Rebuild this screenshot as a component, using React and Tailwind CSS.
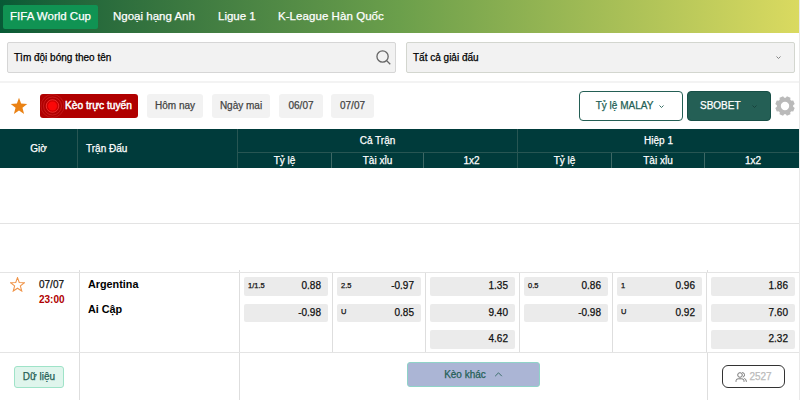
import React from "react";

const LEAGUES = [
  { name: "Ngoại hạng Anh", cls: "ml-[15px] w-[84px]" },
  { name: "Ligue 1", cls: "ml-[21px] w-[39px]" },
  { name: "K-League Hàn Quốc", cls: "ml-[21px] tracking-[0.06px]" },
];

const DAYS = [
  { name: "Hôm nay", cls: "ml-[9px] w-[56px]" },
  { name: "Ngày mai", cls: "ml-[9px] w-[58px]" },
  { name: "06/07", cls: "ml-[9px] w-[44px]" },
  { name: "07/07", cls: "ml-[8px] w-[43px]" },
];

const MARKETS = [
  { width: "w-[93px]", odds: [["1/1.5", "0.88"], ["", "-0.98"]] },
  { width: "w-[93px]", odds: [["2.5", "-0.97"], ["U", "0.85"]] },
  { width: "w-[94px]", odds: [["", "1.35"], ["", "9.40"], ["", "4.62"]] },
  { width: "w-[93px]", odds: [["0.5", "0.86"], ["", "-0.98"]] },
  { width: "w-[94px]", odds: [["1", "0.96"], ["U", "0.92"]] },
  { width: "w-[93px]", odds: [["", "1.86"], ["", "7.60"], ["", "2.32"]] },
];

const STAR = "M12 1l2.800 7.800 8.200.4-6.400 5.100 2.200 8.200L12 17.900l-6.800 4.600 2.200-8.200L1 9.200l8.200-.4z";

function Star({ filled, className }) {
  return (
    <svg viewBox="0 0 24 24" className={className} fill={filled ? "#ea8215" : "none"} stroke="#f0954a" strokeWidth={filled ? 0 : 1.7}>
      <path d={STAR} />
    </svg>
  );
}

function Chevron({ up, className }) {
  return (
    <svg viewBox="0 0 10 6" className={className} fill="none" stroke="currentColor" strokeWidth={up ? 1 : 1.8}>
      <path d={up ? "M1 5l4-4 4 4" : "M1 1l4 4 4-4"} />
    </svg>
  );
}

function Gear() {
  return (
    <svg viewBox="0 0 20 20" className="ml-[4px] h-[20px] w-[20px]" fill="none">
      <circle cx="10" cy="10" r="6.200" stroke="#bababa" strokeWidth="4" />
      <g fill="#bababa">
        {[22.5, 67.5, 112.5, 157.5, 202.5, 247.5, 292.5, 337.5].map((a) => (
          <path key={a} d="M7.300 3L8.100 0.300h3.800L12.700 3z" transform={`rotate(${a} 10 10)`} />
        ))}
      </g>
    </svg>
  );
}

function Live() {
  return (
    <svg viewBox="0 0 24 24" className="h-[24px] w-[24px] shrink-0 overflow-visible" fill="none">
      <circle cx="12.500" cy="12" r="11.500" stroke="#dc4040" strokeOpacity=".5" strokeWidth=".7" />
      <circle cx="12.500" cy="12" r="9" stroke="#e84040" strokeOpacity=".6" strokeWidth=".7" />
      <circle cx="12.500" cy="12" r="6.300" fill="#cf0000" stroke="#ff4545" strokeOpacity=".8" strokeWidth=".8" />
      <circle cx="12.500" cy="12" r="4.500" fill="#fb0808" />
    </svg>
  );
}

function HeadGroup({ title, widths, className }) {
  return (
    <div className={`flex flex-col border-l border-[#275653] ${className}`}>
      <div className="flex h-[24px] items-center justify-center border-b border-[#275653]">{title}</div>
      <div className="flex h-[15px]">
        {["Tỷ lệ", "Tài xỉu", "1x2"].map((t, i) => (
          <div key={t} className={`flex items-center justify-center ${widths[i]} ${i ? "border-l border-[#3d6865]" : ""} ${i === 2 ? "pl-[2px]" : ""}`}>
            {t}
          </div>
        ))}
      </div>
    </div>
  );
}

export default function App() {
  return (
    <div className="h-[400px] w-[800px] overflow-hidden border-r border-[#e9e9e9] bg-white font-['Liberation_Sans',Arial,sans-serif] text-[10px] leading-none text-[#111] [-webkit-text-stroke:0.25px]">
      <nav className="flex h-[33px] items-center bg-linear-to-r from-[#075a36] via-[#6b9f4b] to-[#dada60] pl-[3px] text-[11.5px] whitespace-nowrap text-white">
        <div className="flex h-[24px] w-[95px] items-center justify-center rounded-[2px] bg-[#109353]">FIFA World Cup</div>
        {LEAGUES.map((l) => (
          <div key={l.name} className={l.cls}>{l.name}</div>
        ))}
      </nav>

      <div className="flex h-[50px] gap-[10px] border-b-2 border-[#f3f3f3] pt-[9px] pr-[4px] pl-[7px] text-black">
        <div className="flex h-[31px] w-[389px] items-center justify-between rounded-[2px] border border-[#d6d6d6] bg-[#f2f2f2] pr-[4px] pl-[6px]">
          <span>Tìm đội bóng theo tên</span>
          <svg viewBox="0 0 16 16" className="h-[15px] w-[15px]" fill="none" stroke="#666" strokeWidth="1.4">
            <circle cx="7" cy="7" r="6" />
            <path d="M11.200 11.200l4 4" />
          </svg>
        </div>
        <div className="flex h-[31px] w-[389px] items-center justify-between rounded-[2px] border border-[#d3d6cf] bg-[#f2f2f2] pr-[13px] pl-[6px]">
          <span>Tất cả giải đấu</span>
          <Chevron className="h-[3px] w-[5px] text-[#777]" />
        </div>
      </div>

      <div className="flex h-[46px] items-center pr-[4px] pl-[10px] whitespace-nowrap text-[#444]">
        <Star filled className="h-[18px] w-[18px]" />
        <div className="ml-[12px] flex h-[24px] w-[98px] items-center rounded-[3px] bg-[#b00000] text-white [-webkit-text-stroke:0.45px]">
          <Live />
          <span className="ml-[1px] text-[10.200px]">Kèo trực tuyến</span>
        </div>
        {DAYS.map((d) => (
          <div key={d.name} className={`flex h-[24px] items-center justify-center rounded-[3px] bg-[#f2f2f2] ${d.cls}`}>{d.name}</div>
        ))}
        <div className="ml-auto flex h-[30px] w-[104px] items-center justify-center gap-[6px] rounded-[4px] border border-[#245f55] pr-[2px] text-[#245f55]">
          Tỷ lệ MALAY
          <Chevron className="h-[3px] w-[5px]" />
        </div>
        <div className="ml-[4px] flex h-[30px] w-[84px] items-center rounded-[4px] border border-[#174f47] bg-[#245f55] pl-[12px] text-white">
          SBOBET
          <Chevron className="ml-[11px] h-[3px] w-[5px] text-[#163f3a]" />
        </div>
        <Gear />
      </div>

      <div className="flex h-[39px] w-[799px] bg-[#003b3b] text-white">
        <div className="flex w-[77px] items-center justify-center">Giờ</div>
        <div className="flex w-[160px] items-center border-l border-[#275653] pl-[8px]">Trận Đấu</div>
        <HeadGroup title="Cả Trận" className="w-[280px]" widths={["w-[93px]", "w-[92px]", "w-[94px]"]} />
        <HeadGroup title="Hiệp 1" className="w-[282px]" widths={["w-[93px]", "w-[93px]", "w-[95px]"]} />
      </div>

      <div className="h-[56px] border-b border-[#e3e3e3]" />
      <div className="h-[46px]" />
      <div className="flex h-[2px]">
        <div className="w-[79px]" />
        <div className="w-[160px] border-l border-[#dedede]" />
        <div className="w-[468px] border-l border-[#dedede]" />
        <div className="border-l border-[#dedede]" />
      </div>

      <div className="flex h-[81px] border-y border-[#e4e4e4]">
        <div className="flex w-[79px] pl-[10px]">
          <Star className="mt-[4px] h-[15px] w-[15px]" />
          <div className="ml-[14px] pt-[7px]">
            <div>07/07</div>
            <div className="mt-[5px] font-bold text-[#b00000] [-webkit-text-stroke:0px]">23:00</div>
          </div>
        </div>
        <div className="w-[160px] border-l border-[#dedede] pt-[6px] pl-[8px] text-[10.800px] font-bold text-black [-webkit-text-stroke:0px]">
          <div>Argentina</div>
          <div className="mt-[14px]">Ai Cập</div>
        </div>
        {MARKETS.map((m, i) => (
          <div key={i} className={`flex flex-col gap-[8px] border-l border-[#dedede] px-[4px] pt-[4px] ${m.width}`}>
            {m.odds.map(([line, price], j) => (
              <div key={j} className="flex h-[18.500px] items-center justify-between rounded-[2px] bg-[#ebebeb] pr-[7px] pl-[4px]">
                <span className="mb-[2px] text-[7.500px]">{line}</span>
                <span>{price}</span>
              </div>
            ))}
          </div>
        ))}
      </div>

      <div className="flex h-[47px]">
        <div className="w-[79px] pt-[13px] pl-[14px]">
          <div className="flex h-[22px] w-[50px] items-center justify-center rounded-[3px] border border-[#9fe3c8] bg-[#dff5ec] text-[#245f55]">Dữ liệu</div>
        </div>
        <div className="w-[160px] border-l border-[#dedede]" />
        <div className="w-[468px] border-l border-[#dedede] pt-[9px] pl-[167px]">
          <div className="flex h-[25px] w-[133px] items-center justify-center gap-[8px] rounded-[3px] border border-[#8fd3c8] bg-[#abb5d5] text-[#245f55]">
            Kèo khác
            <Chevron up className="h-[5px] w-[9px]" />
          </div>
        </div>
        <div className="border-l border-[#dedede] pt-[12px] pl-[14px]">
          <div className="flex h-[23px] w-[63px] items-center justify-center gap-[2px] rounded-[6px] border border-[#333] text-[#bbb]">
            <svg viewBox="0 0 12 12" className="mt-px h-[12px] w-[12px]" fill="none" stroke="#777">
              <circle cx="5" cy="4" r="2.300" />
              <path d="M7.200 1.500a2.400 2.400 0 0 1 .6 4.700M1 10.800V9.800Q1 7.800 3.200 7.800h3.600Q9 7.800 9 9.800v1M9.300 7.500q2 .3 2.100 3.300" />
            </svg>
            2527
          </div>
        </div>
      </div>
    </div>
  );
}
